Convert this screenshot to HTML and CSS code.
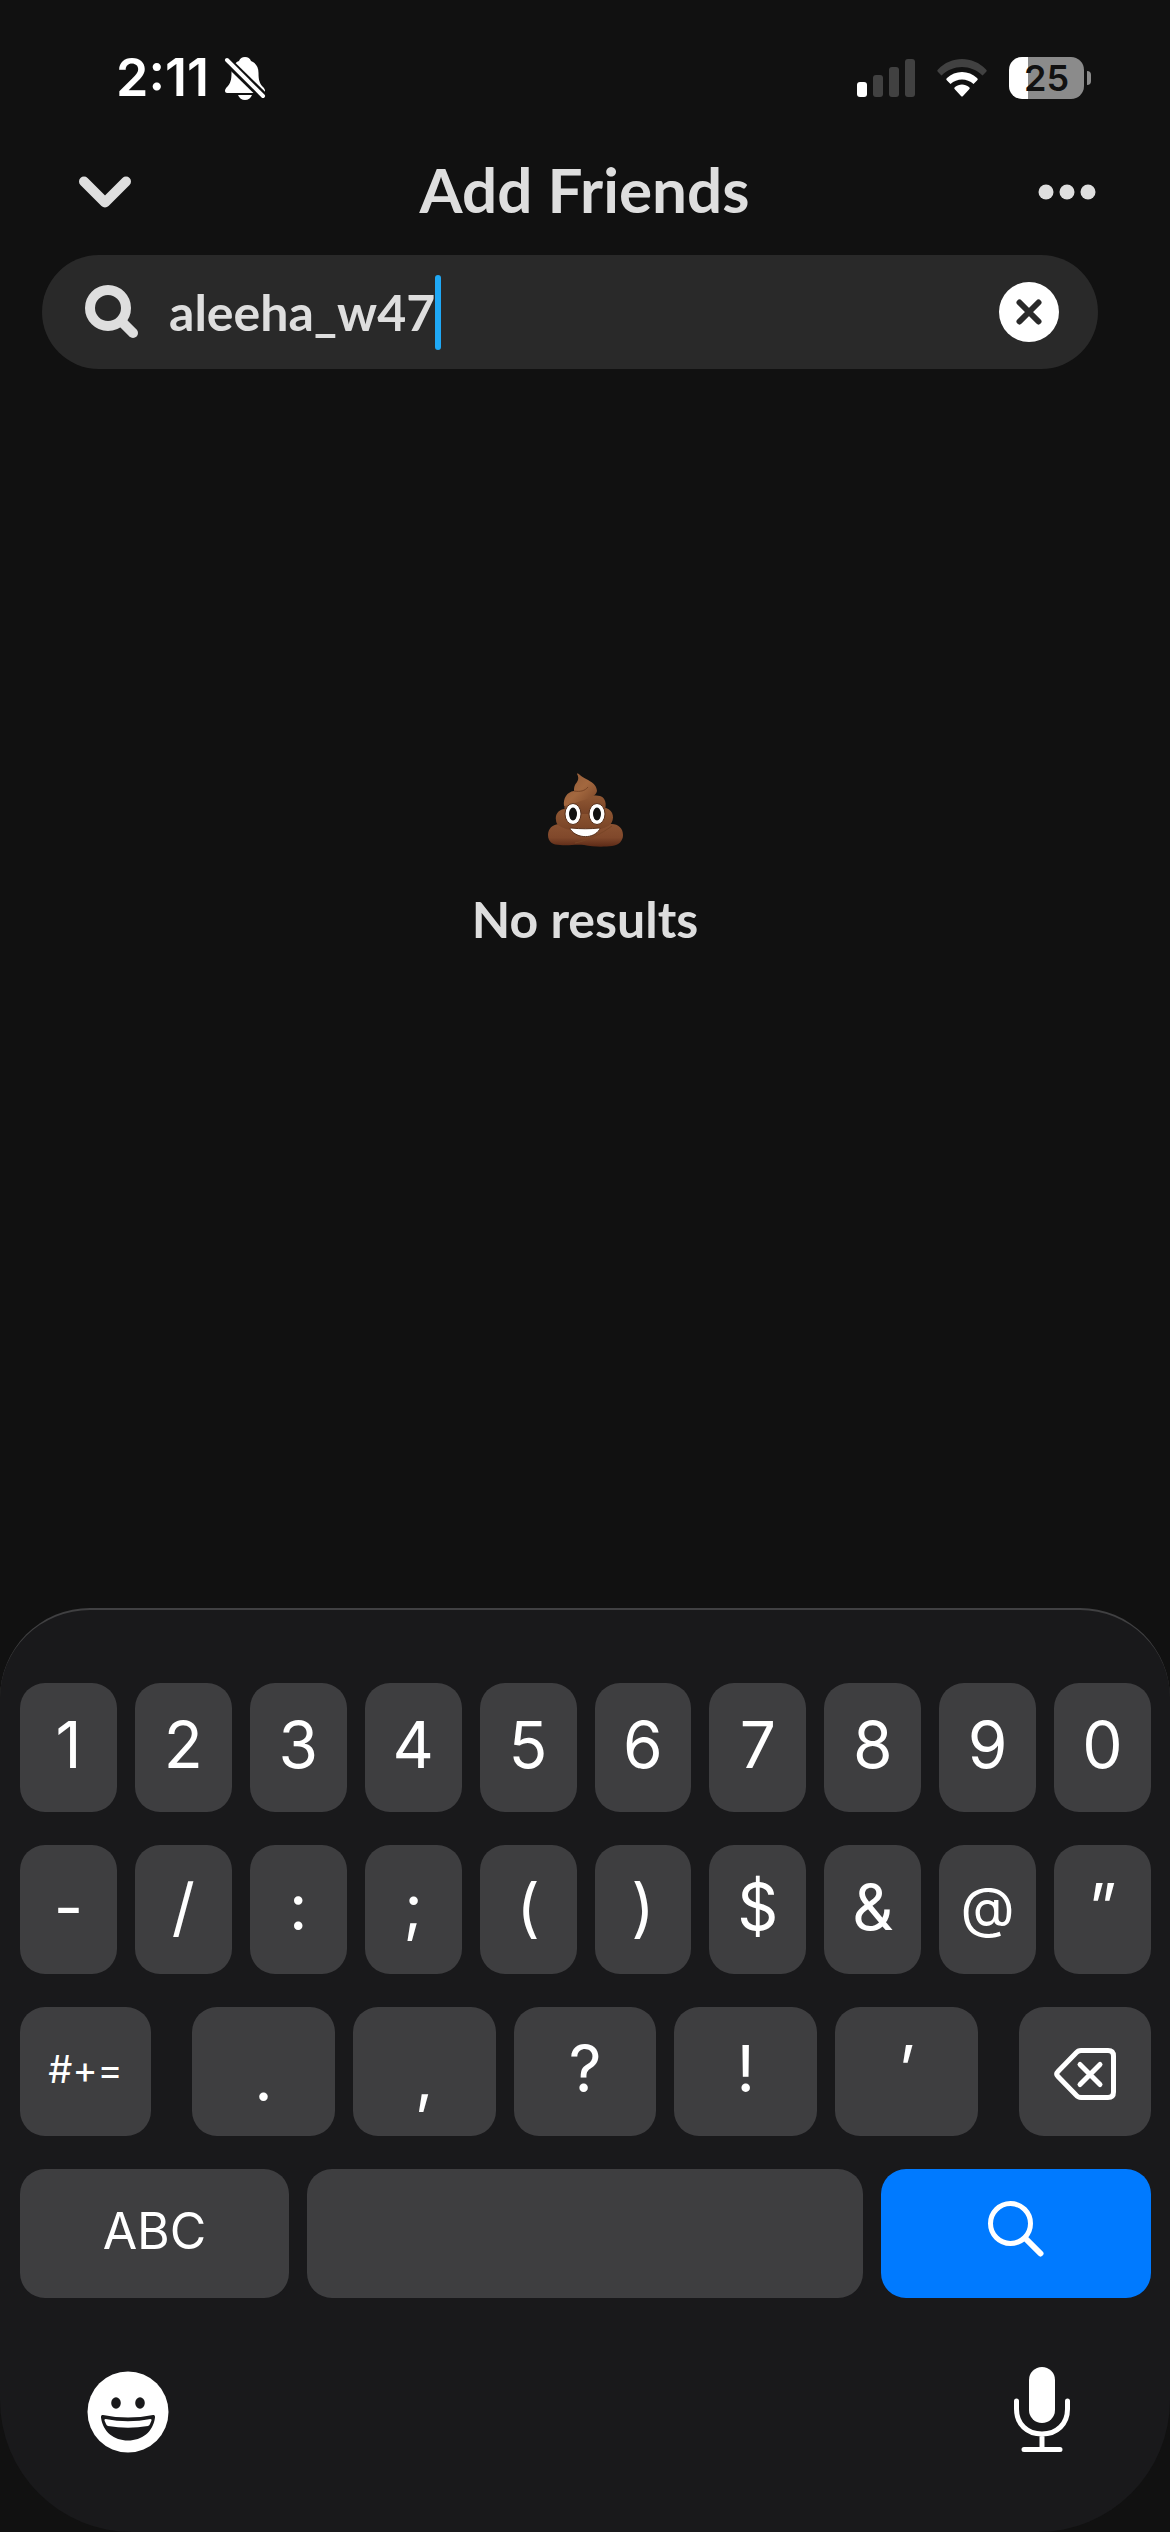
FILE: index.html
```html
<!DOCTYPE html>
<html lang="en">
<head>
<meta charset="utf-8">
<meta name="viewport" content="width=device-width, initial-scale=1">
<title>Add Friends</title>
<link rel="stylesheet" href="styles.css">
</head>
<body>
<div class="status">
  <div class="status-group">
    <span class="time">2:11</span>
    <svg class="bell" width="42" height="44" viewBox="0 0 42 44" aria-hidden="true">
      <path fill="#fff" d="M21 1c-3 0-5 1.500-6 4C10 7 7.500 11 7.500 17c0 7-1 10-4 13.500C1.500 32.500 1 33.500 1 35c0 1 1 2 2 2h36c1 0 2-1 2-2 0-1.500-.5-2.500-2.500-4.500-3-3.500-4-6.500-4-13.500 0-6-2.500-10-7.500-12-1-2.500-3-4-6-4z"/>
      <path fill="#fff" d="M14 39h14c-1 3-4 5-7 5s-6-2-7-5z"/>
      <path stroke="#111" stroke-width="9" d="M1 3 41 42"/>
      <path stroke="#fff" stroke-width="4" stroke-linecap="round" d="M3 4 39 40"/>
    </svg>
  </div>
  <div class="status-group status-right">
    <svg width="58" height="38" viewBox="0 0 58 38" aria-hidden="true">
      <rect x="0" y="23" width="10" height="15" rx="3" fill="#fff"/>
      <rect x="16" y="16" width="10" height="22" rx="3" fill="#414141"/>
      <rect x="32" y="8" width="10" height="30" rx="3" fill="#414141"/>
      <rect x="48" y="0" width="10" height="38" rx="3" fill="#414141"/>
    </svg>
    <svg width="50" height="38" viewBox="0 0 50 38" aria-hidden="true">
      <path fill="#414141" d="M1 10.500C14-3.500 36-3.500 49 10.500 50 11.500 50 12 49 13l-3.500 3.500C34 5 16 5 4.500 16.500L1 13C0 12 0 11.500 1 10.500z"/>
      <path fill="#fff" d="M10 19C18 11 32 11 40 19c1 1 1 1.500 0 2.500L36.500 25C30 19 20 19 13.500 25L10 21.500C9 20.500 9 20 10 19z"/>
      <path fill="#fff" d="M18 28c4-3.500 10-3.500 14 0 1 1 1 1.500 0 2.500l-6 6.500c-.7.700-1.300.700-2 0l-6-6.500c-1-1-1-1.500 0-2.500z"/>
    </svg>
    <div class="battery">
      <span class="battery-body">25</span>
      <span class="battery-cap"></span>
    </div>
  </div>
</div>

<header class="header">
  <button class="icon-btn" aria-label="Close">
    <svg width="52" height="32" viewBox="0 0 52 32"><path d="M5 5.500 26 26.500 47 5.500" fill="none" stroke="#dedede" stroke-width="10" stroke-linecap="round" stroke-linejoin="round"/></svg>
  </button>
  <h1 class="title">Add Friends</h1>
  <button class="icon-btn" aria-label="More">
    <svg width="58" height="16" viewBox="0 0 58 16" fill="#dedede"><circle cx="8" cy="8" r="7.500"/><circle cx="29" cy="8" r="7.500"/><circle cx="50" cy="8" r="7.500"/></svg>
  </button>
</header>

<form class="search">
  <svg width="54" height="54" viewBox="0 0 54 54" fill="none" stroke="#dedede" stroke-width="10" aria-hidden="true"><circle cx="23" cy="23" r="18"/><path stroke-linecap="round" d="M37 37 48 48"/></svg>
  <label class="search-field">
    <input class="search-input" type="text" value="aleeha_w47" aria-label="Search friends" spellcheck="false">
    <span class="caret"></span>
  </label>
  <button class="icon-btn" type="button" aria-label="Clear">
    <svg width="60" height="60" viewBox="0 0 60 60"><circle cx="30" cy="30" r="30" fill="#fff"/><path d="M20.500 20.500 39.500 39.500M39.500 20.500 20.500 39.500" stroke="#292929" stroke-width="6" stroke-linecap="round"/></svg>
  </button>
</form>

<main class="results">
  <svg class="poop" width="76" height="74" viewBox="0 0 76 74" role="img" aria-label="Pile of poo">
    <defs>
      <linearGradient id="base" x1="0" y1="0" x2="0" y2="1"><stop offset="0" stop-color="#8a5232"/><stop offset=".6" stop-color="#80482b"/><stop offset="1" stop-color="#5c2a17"/></linearGradient>
      <linearGradient id="mid" x1="0" y1="0" x2="0" y2="1"><stop offset="0" stop-color="#905834"/><stop offset="1" stop-color="#784326"/></linearGradient>
      <linearGradient id="top" x1="0" y1="0" x2="1" y2="1"><stop offset="0" stop-color="#8d5836"/><stop offset=".5" stop-color="#a3683f"/><stop offset="1" stop-color="#784326"/></linearGradient>
    </defs>
    <path fill="url(#base)" d="M13 51C5 51 1 56 1 62c0 7 5 10 12 10 9 1 15-1 24 0 9 2 20 2 28 1 7-1 11-5 11-11 0-7-5-11-11-11z"/>
    <path fill="url(#mid)" d="M17 36c-6 1-9 6-8 11 0 2 1 4 2 5 12 9 40 8 52 0 5-6 4-14-4-17z"/>
    <path fill="url(#mid)" d="M20 27c-4 5-3 10 0 14h36c4-6 4-16-3-18-9-2-20 0-33 4z"/>
    <path fill="url(#top)" d="M30 1c3 5 0 8-2 11-1 2-1 4-1 6-7 1-11 7-10 15 8-1 12-4 20-6 6-2 12-4 13-9C50 9 37 6 33 2 32 1 30 0 30 1z"/>
    <path fill="none" stroke="#784526" d="M27 18c6 1 11 0 14-4M28 70c14-3 26-9 37-17"/>
    <g fill="#fff" stroke="#57301b"><ellipse cx="26" cy="41" rx="8" ry="10.500"/><ellipse cx="50" cy="41" rx="8" ry="10.500"/></g>
    <ellipse cx="26" cy="41" rx="4" ry="6.500" fill="#111"/><ellipse cx="50" cy="41" rx="4" ry="6.500" fill="#111"/>
    <path fill="#fff" stroke="#57301b" d="M24 55c10 1 19 1 28 0 1 0 1 1 .5 1.500C47 66 30 66 23.500 56.500 23 56 23 55 24 55z"/>
  </svg>
  <p class="results-text">No results</p>
</main>

<section class="keyboard" aria-label="Keyboard">
  <div class="keys keys-ten">
    <button class="key">1</button><button class="key">2</button><button class="key">3</button><button class="key">4</button><button class="key">5</button><button class="key">6</button><button class="key">7</button><button class="key">8</button><button class="key">9</button><button class="key">0</button>
    <button class="key">-</button><button class="key">/</button><button class="key">:</button><button class="key">;</button><button class="key">(</button><button class="key">)</button><button class="key">$</button><button class="key">&amp;</button><button class="key key-at">@</button><button class="key">”</button>
  </div>
  <div class="keys keys-punctuation">
    <button class="key key-symbols">#+=</button>
    <div class="keys keys-five">
      <button class="key key-low">.</button><button class="key key-low">,</button><button class="key">?</button><button class="key">!</button><button class="key">’</button>
    </div>
    <button class="key key-icon" aria-label="Delete">
      <svg width="62" height="52" viewBox="0 0 62 52" fill="none" stroke="#fff" stroke-width="5" stroke-linecap="round" stroke-linejoin="round"><path d="M27 2.500H54Q59.500 2.500 59.500 8V44Q59.500 49.500 54 49.500H27Q24 49.500 22 47L4 28.500Q1.500 26 4 23.500L22 5Q24 2.500 27 2.500z"/><path d="M26 16.500 46 36.500M46 16.500 26 36.500"/></svg>
    </button>
  </div>
  <div class="keys keys-bottom">
    <button class="key key-abc">ABC</button>
    <button class="key" aria-label="Space"></button>
    <button class="key key-search" aria-label="Search">
      <svg width="56" height="56" viewBox="0 0 56 56" fill="none" stroke="#fff" stroke-width="5"><circle cx="22.500" cy="22.500" r="20"/><path stroke-width="6" stroke-linecap="round" d="M37.500 37.500 52.500 52.500"/></svg>
    </button>
  </div>
  <div class="tools">
    <button class="icon-btn" aria-label="Emoji">
      <svg width="82" height="82" viewBox="0 0 82 82"><circle cx="41" cy="41" r="40.500" fill="#fff"/><g fill="#19191b"><ellipse cx="29" cy="32" rx="4.800" ry="5.700"/><ellipse cx="53" cy="32" rx="4.800" ry="5.700"/><path d="M16 44Q41 49 66 44Q68.500 43.500 68 46.500C66 61 55 69.500 41 69.500S16 61 14 46.500Q13.500 43.500 16 44z"/></g><path fill="#fff" d="M18.500 48Q41 52.500 63.500 48Q65 48 64.500 49.500L63 53Q62.500 54.500 61 55Q41 58.500 21 55Q19.500 54.500 19 53L17.500 49.500Q17 48 18.500 48z"/></svg>
    </button>
    <button class="icon-btn" aria-label="Dictate">
      <svg width="56" height="86" viewBox="0 0 56 86"><rect x="15" y="0" width="26" height="56" rx="13" fill="#fff"/><path d="M2.500 34V42C2.500 57 13 67 28 67S53.500 57 53.500 42V34M28 67V82M10 82.500H46" fill="none" stroke="#fff" stroke-width="5" stroke-linecap="round"/></svg>
    </button>
  </div>
</section>
</body>
</html>
```
FILE: styles.css
```css
* {
  box-sizing: border-box;
}

body {
  margin: 0;
  min-height: 100vh;
  display: flex;
  flex-direction: column;
  background: #111;
  color: #dedede;
  font-family: Lato, "Liberation Sans", sans-serif;
}

button {
  padding: 0;
  border: 0;
  background: none;
  color: inherit;
  font: inherit;
}

svg {
  display: block;
  flex: none;
}

.status {
  display: flex;
  justify-content: space-between;
  align-items: center;
  padding: 48px 79px 0 116px;
  font-family: Inter, "Liberation Sans", sans-serif;
}

.status-group {
  display: flex;
  align-items: center;
  gap: 15px;
}

.status-right {
  gap: 22px;
}

.time {
  color: #fff;
  font-size: 52px;
  font-weight: 600;
  line-height: 60px;
}

.battery {
  display: flex;
  align-items: center;
  gap: 3px;
}

.battery-body {
  width: 75px;
  border-radius: 13px;
  background: linear-gradient(90deg, #fff 19px, #8b8b8b 19px);
  color: #111;
  font-size: 36px;
  font-weight: 600;
  line-height: 42px;
  text-align: center;
}

.battery-cap {
  width: 4px;
  height: 14px;
  border-radius: 0 4px 4px 0;
  background: #8b8b8b;
}

.header {
  display: flex;
  justify-content: space-between;
  align-items: center;
  padding: 48px 74px 27px 79px;
}

.icon-btn {
  flex: none;
}

.title {
  margin: 0;
  padding-bottom: 6px;
  font-size: 62px;
  font-weight: 700;
  line-height: 66px;
}

.search {
  display: flex;
  align-items: center;
  gap: 30px;
  height: 114px;
  margin: 0 72px 0 42px;
  padding: 0 39px 0 43px;
  border-radius: 57px;
  background: #292929;
}

.search-field {
  display: flex;
  flex: 1;
  align-items: center;
}

.search-input {
  field-sizing: content;
  padding: 0;
  border: 0;
  outline: 0;
  background: none;
  color: inherit;
  font-family: inherit;
  font-size: 50px;
  font-weight: 700;
  line-height: 60px;
}

.caret {
  width: 6px;
  height: 75px;
  border-radius: 3px;
  background: #1fa8f5;
}

.results {
  flex: 1;
  display: flex;
  flex-direction: column;
  align-items: center;
  gap: 42px;
  padding-top: 404px;
}

.results-text {
  margin: 0;
  font-size: 50px;
  font-weight: 700;
  line-height: 60px;
}

.keyboard {
  display: flex;
  flex-direction: column;
  gap: 33px;
  padding: 73px 19px 79px 20px;
  border-top: 2px solid #404042;
  border-radius: 90px 90px 132px 132px;
  background: #19191b;
  color: #fff;
  font-family: Inter, "Liberation Sans", sans-serif;
}

.keys {
  display: grid;
  gap: 33px 18px;
}

.keys-ten {
  grid-template-columns: repeat(10, 1fr);
}

.keys-five {
  grid-template-columns: repeat(5, 1fr);
}

.keys-punctuation {
  grid-template-columns: 131fr 786fr 132fr;
  column-gap: 41px;
}

.keys-bottom {
  grid-template-columns: 269fr 556fr 270fr;
}

.key {
  display: flex;
  justify-content: center;
  align-items: center;
  height: 129px;
  padding-bottom: 6px;
  border-radius: 25px;
  background: #3e3e40;
  font-size: 64px;
}

.key-low {
  padding: 12px 0 0;
}

.key-at {
  font-size: 56px;
}

.key-symbols {
  font-size: 38px;
}

.key-abc {
  font-size: 50px;
}

.key-icon {
  padding: 4px 0 0;
}

.key-search {
  padding-bottom: 10px;
  background: #007aff;
}

.tools {
  display: flex;
  justify-content: space-between;
  align-items: flex-end;
  padding: 36px 81px 0 67px;
}
```
